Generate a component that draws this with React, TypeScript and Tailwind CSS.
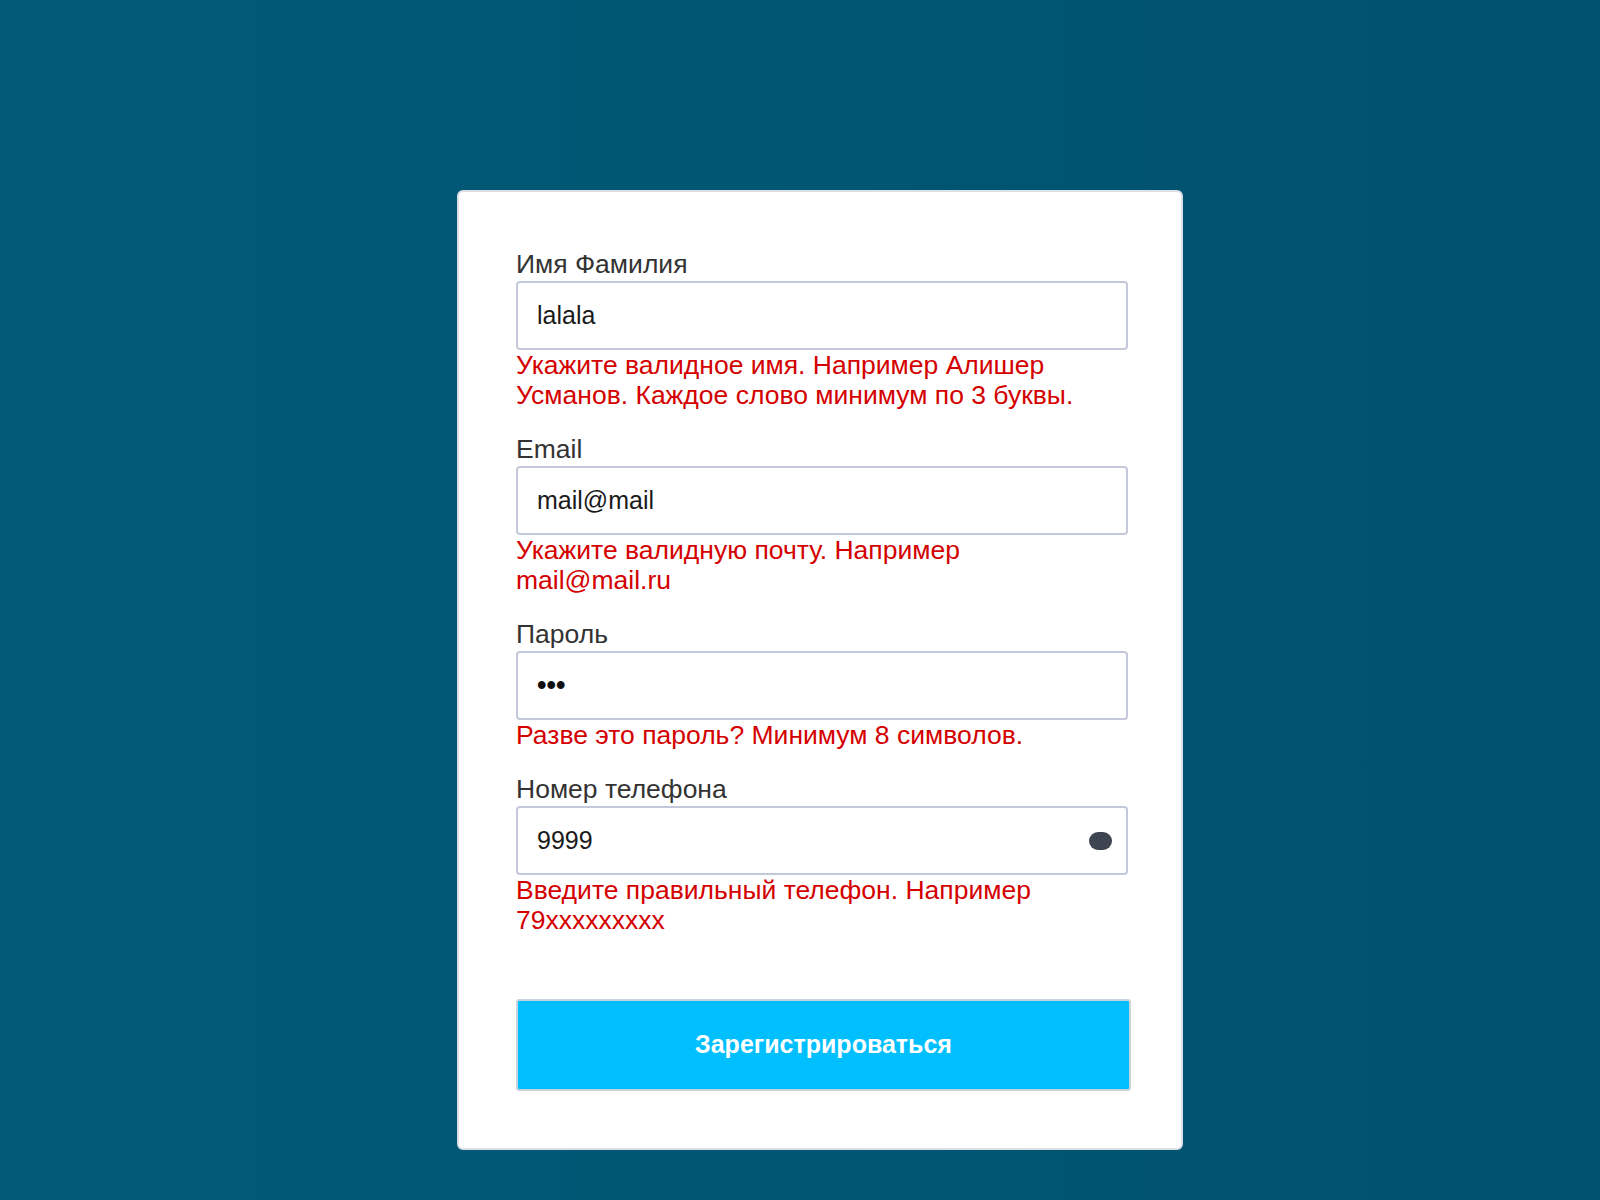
const fields = [
  {
    label: "Имя Фамилия",
    value: "lalala",
    type: "text",
    error: "Укажите валидное имя. Например Алишер Усманов. Каждое слово минимум по 3 буквы.",
  },
  {
    label: "Email",
    value: "mail@mail",
    type: "text",
    error: "Укажите валидную почту. Например mail@mail.ru",
  },
  {
    label: "Пароль",
    value: "•••",
    type: "password",
    error: "Разве это пароль? Минимум 8 символов.",
  },
  {
    label: "Номер телефона",
    value: "9999",
    type: "tel",
    error: "Введите правильный телефон. Например 79xxxxxxxxx",
  },
];

const Field = ({
  label,
  value,
  type,
  error,
}: {
  label: string;
  value: string;
  type: string;
  error: string;
}) => (
  <div className="flex flex-col">
    <label className="text-[26.5px] leading-[28px] text-[#333333]">{label}</label>
    <div className="relative mt-[3px] flex h-[69px] items-center rounded-[4px] border-2 border-[#c3c9da] bg-white pl-[19px]">
      {type === "password" ? (
        <span className="text-[27px] font-bold leading-none text-[#111]">{value}</span>
      ) : (
        <span className="text-[25px] text-[#1a1a1a]">{value}</span>
      )}
      {type === "tel" && (
        <span className="absolute right-[14px] top-1/2 h-[18px] w-[23px] -translate-y-1/2 rounded-full bg-[#3f4451]" />
      )}
    </div>
    <p className="max-w-[585px] text-[26.5px] leading-[30px] text-[#d40000]">{error}</p>
  </div>
);

export default function App() {
  return (
    <div
      className="flex min-h-screen justify-center bg-gradient-to-r from-[#005a78] to-[#00526e] pl-[40px] pt-[190px]"
      style={{ fontFamily: '"Liberation Sans", Arial, sans-serif' }}
    >
      <form className="mb-[50px] flex h-[960px] w-[726px] flex-col rounded-[6px] border-2 border-[#dcdfe6] bg-white pb-[57px] pl-[57px] pr-[53px] pt-[58px]">
        <div className="flex flex-col gap-[25px]">
          {fields.map((f) => (
            <Field key={f.label} {...f} />
          ))}
        </div>
        <button
          type="button"
          className="mt-[64px] h-[93px] w-[615px] rounded-[3px] border-2 border-[#c9d3de] bg-[#00bfff] text-[25px] font-bold text-white"
        >
          Зарегистрироваться
        </button>
      </form>
    </div>
  );
}
